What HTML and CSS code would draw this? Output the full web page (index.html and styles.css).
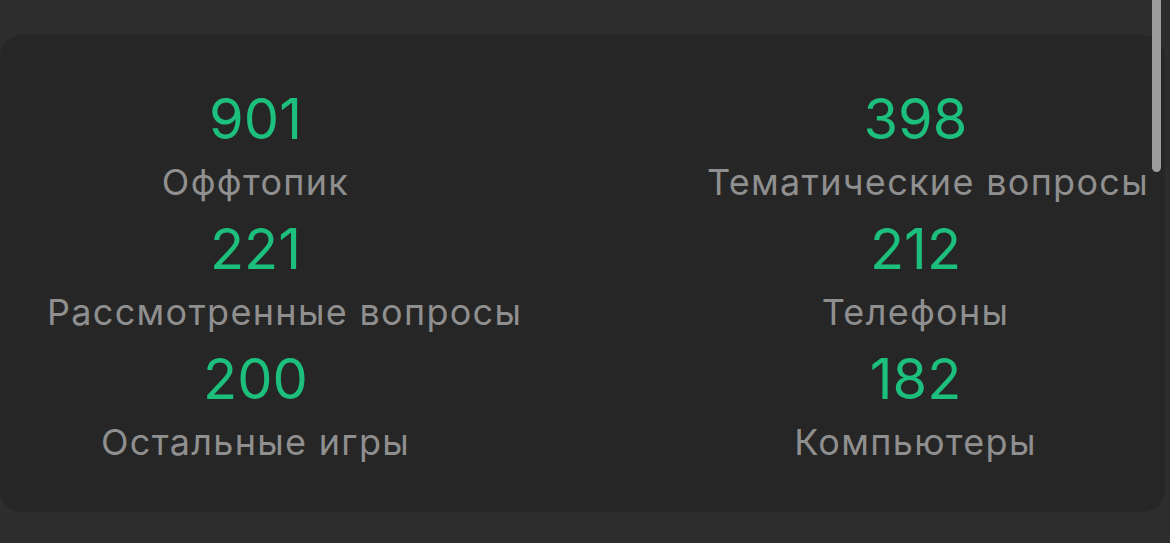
FILE: index.html
```html
<!DOCTYPE html>
<html lang="ru">
<head>
	<meta charset="UTF-8">
	<title>Разделы</title>
	<link rel="stylesheet" href="styles.css">
</head>
<body>
	<div class="page">
		<div class="card">
			<ul class="stats">
				<li><span class="num">901</span><span class="name">Оффтопик</span></li>
				<li><span class="num">398</span><span class="name">Тематические вопросы</span></li>
				<li><span class="num">221</span><span class="name">Рассмотренные вопросы</span></li>
				<li><span class="num">212</span><span class="name">Телефоны</span></li>
				<li><span class="num">200</span><span class="name">Остальные игры</span></li>
				<li><span class="num">182</span><span class="name">Компьютеры</span></li>
			</ul>
		</div>
		<div class="scrollbar"></div>
	</div>
</body>
</html>
```

FILE: styles.css
```css
*{
	padding:0;
	margin:0;
	list-style:none;
	box-sizing:border-box;
}
body{
	background-color:#2d2d2d;
	font-family:Inter,"Noto Sans",sans-serif;
}
.page{
	position:relative;
	height:543px;
	padding-top:35px;
}
.card{
	width:1165px;
	height:477px;
	border-radius:22px;
	background-color:#262626;
	padding:53px 0 0 47px;
}
.stats{
	display:grid;
	grid-template-columns:417px 417px;
	column-gap:243px;
}
.stats li{
	height:130px;
	text-align:center;
	white-space:nowrap;
}
.num{
	display:block;
	font-size:56px;
	line-height:62px;
	color:#1dbf7d;
}
.name{
	display:block;
	margin-top:7px;
	font-size:36px;
	line-height:50px;
	color:#8f8f8f;
	letter-spacing:1.3px;
}
.scrollbar{
	position:absolute;
	top:0;
	left:1152px;
	width:9px;
	height:172px;
	border-radius:0 0 5px 5px;
	background-color:#9c9c9c;
}
```
